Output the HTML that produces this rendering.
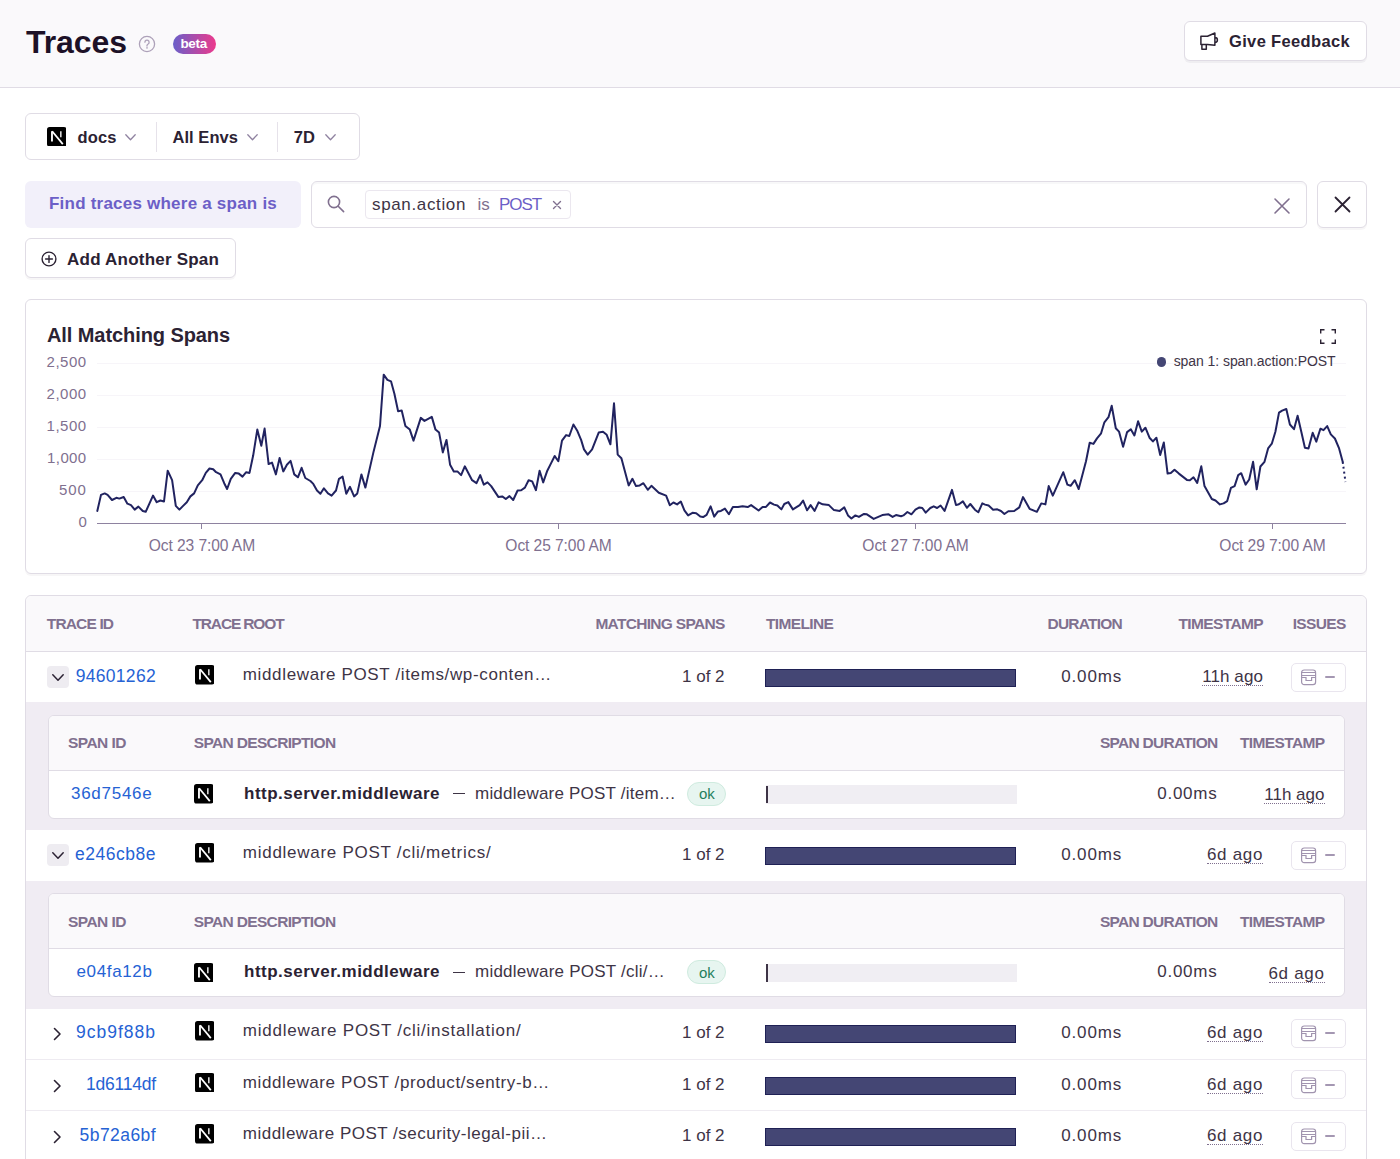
<!DOCTYPE html>
<html><head><meta charset="utf-8"><title>Traces</title>
<style>
html,body{margin:0;padding:0;width:1400px;height:1159px;overflow:hidden;background:#fff;font-family:'Liberation Sans', sans-serif;}
.t{position:absolute;line-height:1;white-space:nowrap;}
</style></head><body>
<div style="position:absolute;left:0px;top:0px;width:1400px;height:88px;box-sizing:border-box;background:#FAF9FB;border-bottom:1px solid #E0DCE5"></div>
<svg style="position:absolute;left:138px;top:35px" width="18" height="18" viewBox="0 0 18 18"><circle cx="9" cy="9" r="7.6" fill="none" stroke="#ADA1B9" stroke-width="1.3"/><path d="M6.9 7.2a2.1 2.1 0 1 1 3.2 1.8c-.7.4-1.1.8-1.1 1.6v.4" fill="none" stroke="#ADA1B9" stroke-width="1.3" stroke-linecap="round"/><circle cx="9" cy="12.9" r=".8" fill="#ADA1B9"/></svg>
<div style="position:absolute;left:173px;top:34px;width:43px;height:20px;box-sizing:border-box;border-radius:10px;background:linear-gradient(90deg,#6A5FC9,#EC3A8C)"></div>
<div style="position:absolute;left:1184px;top:21px;width:183px;height:40px;box-sizing:border-box;background:#fff;border:1px solid #E0DCE5;border-radius:6px;box-shadow:0 2px 0 rgba(43,34,51,0.05)"></div>
<svg style="position:absolute;left:1200px;top:32px" width="19" height="19" viewBox="0 0 19 19"><path d="M0.9 4.3H7.5L14.9 1V13.3L7.5 12.4H0.9Z M1.9 12.4V17.3H6.3V12.4 M15 5.6A2.4 2.4 0 0 1 15 10.4" fill="none" stroke="#2B2233" stroke-width="1.5" stroke-linejoin="round"/></svg>
<div style="position:absolute;left:25px;top:113px;width:335px;height:47px;box-sizing:border-box;background:#fff;border:1px solid #E0DCE5;border-radius:6px"></div>
<svg style="position:absolute;left:46.8px;top:126.8px" width="19.5" height="19.5" viewBox="0 0 20 20"><rect x="0" y="0" width="20" height="20" rx="2.6" fill="#000"/><path d="M5.1 14.9V4.3" stroke="#fff" stroke-width="1.9"/><path d="M5.3 4.4L16.2 17.6" stroke="#fff" stroke-width="1.8"/><path d="M14.2 4.4V10.6" stroke="#fff" stroke-width="1.4"/></svg>
<svg style="position:absolute;left:125px;top:133.5px;overflow:visible" width="11" height="6.5" viewBox="0 0 11 6.5"><path d="M0.8 0.8L5.5 5.7L10.2 0.8" fill="none" stroke="#8F82A0" stroke-width="1.3" stroke-linecap="round" stroke-linejoin="round"/></svg>
<div style="position:absolute;left:156px;top:122px;width:1px;height:30px;box-sizing:border-box;background:#E6E2EA"></div>
<svg style="position:absolute;left:246.5px;top:133.5px;overflow:visible" width="11" height="6.5" viewBox="0 0 11 6.5"><path d="M0.8 0.8L5.5 5.7L10.2 0.8" fill="none" stroke="#8F82A0" stroke-width="1.3" stroke-linecap="round" stroke-linejoin="round"/></svg>
<div style="position:absolute;left:277px;top:122px;width:1px;height:30px;box-sizing:border-box;background:#E6E2EA"></div>
<svg style="position:absolute;left:324.5px;top:133.5px;overflow:visible" width="11" height="6.5" viewBox="0 0 11 6.5"><path d="M0.8 0.8L5.5 5.7L10.2 0.8" fill="none" stroke="#8F82A0" stroke-width="1.3" stroke-linecap="round" stroke-linejoin="round"/></svg>
<div style="position:absolute;left:25px;top:181px;width:276px;height:47px;box-sizing:border-box;background:#F2F0FA;border-radius:6px"></div>
<div style="position:absolute;left:311px;top:181px;width:996px;height:47px;box-sizing:border-box;background:#fff;border:1px solid #E0DCE5;border-radius:6px;box-shadow:inset 0 2px 1px rgba(43,34,51,0.03)"></div>
<svg style="position:absolute;left:327px;top:195px" width="18" height="18" viewBox="0 0 18 18"><circle cx="7" cy="7" r="5.6" fill="none" stroke="#80708F" stroke-width="1.6"/><path d="M11.2 11.2L16.6 16.6" stroke="#80708F" stroke-width="1.6" stroke-linecap="round"/></svg>
<div style="position:absolute;left:365px;top:190px;width:206px;height:29px;box-sizing:border-box;background:#fff;border:1px solid #EBE7EF;border-radius:4px"></div>
<svg style="position:absolute;left:552px;top:200px" width="10" height="10" viewBox="0 0 10 10"><path d="M1.5 1.5L8.5 8.5M8.5 1.5L1.5 8.5" stroke="#80708F" stroke-width="1.4" stroke-linecap="round"/></svg>
<svg style="position:absolute;left:1273px;top:197px" width="18" height="18" viewBox="0 0 18 18"><path d="M2 2L16 16M16 2L2 16" stroke="#80708F" stroke-width="1.6" stroke-linecap="round"/></svg>
<div style="position:absolute;left:1317px;top:181px;width:50px;height:47px;box-sizing:border-box;background:#fff;border:1px solid #E0DCE5;border-radius:6px;box-shadow:0 2px 0 rgba(43,34,51,0.04)"></div>
<svg style="position:absolute;left:1334px;top:196px" width="17" height="17" viewBox="0 0 17 17"><path d="M1.5 1.5L15.5 15.5M15.5 1.5L1.5 15.5" stroke="#2B2233" stroke-width="1.8" stroke-linecap="round"/></svg>
<div style="position:absolute;left:25px;top:238px;width:211px;height:40px;box-sizing:border-box;background:#fff;border:1px solid #E0DCE5;border-radius:6px;box-shadow:0 2px 0 rgba(43,34,51,0.04)"></div>
<svg style="position:absolute;left:41px;top:251px" width="16" height="16" viewBox="0 0 16 16"><circle cx="8" cy="8" r="6.9" fill="none" stroke="#2B2233" stroke-width="1.4"/><path d="M8 4.6v6.8M4.6 8h6.8" stroke="#2B2233" stroke-width="1.4" stroke-linecap="round"/></svg>
<div style="position:absolute;left:25px;top:299px;width:1342px;height:275px;box-sizing:border-box;background:#fff;border:1px solid #E0DCE5;border-radius:6px;box-shadow:0 2px 0 rgba(43,34,51,0.04)"></div>
<svg style="position:absolute;left:1319.5px;top:329px" width="16" height="15" viewBox="0 0 16 15"><path d="M0.7 4.5V0.7h3.8M11.5 0.7h3.8v3.8M15.3 10.5v3.8h-3.8M4.5 14.3H0.7v-3.8" fill="none" stroke="#2B2233" stroke-width="1.4"/></svg>
<div style="position:absolute;left:97px;top:363px;width:1249px;height:1px;box-sizing:border-box;background:#F7F5F9"></div>
<div style="position:absolute;left:97px;top:395px;width:1249px;height:1px;box-sizing:border-box;background:#F7F5F9"></div>
<div style="position:absolute;left:97px;top:427px;width:1249px;height:1px;box-sizing:border-box;background:#F7F5F9"></div>
<div style="position:absolute;left:97px;top:459px;width:1249px;height:1px;box-sizing:border-box;background:#F7F5F9"></div>
<div style="position:absolute;left:97px;top:491px;width:1249px;height:1px;box-sizing:border-box;background:#F7F5F9"></div>
<div style="position:absolute;left:97px;top:523px;width:1249px;height:1px;box-sizing:border-box;background:#8E82A0"></div>
<div style="position:absolute;left:1156.8px;top:357px;width:9.5px;height:9.5px;border-radius:50%;background:#444674"></div>
<div style="position:absolute;left:201px;top:524px;width:1px;height:5px;box-sizing:border-box;background:#8E82A0"></div>
<div style="position:absolute;left:558px;top:524px;width:1px;height:5px;box-sizing:border-box;background:#8E82A0"></div>
<div style="position:absolute;left:915px;top:524px;width:1px;height:5px;box-sizing:border-box;background:#8E82A0"></div>
<div style="position:absolute;left:1272px;top:524px;width:1px;height:5px;box-sizing:border-box;background:#8E82A0"></div>
<svg style="position:absolute;left:0;top:0" width="1400" height="600" viewBox="0 0 1400 600"><path d="M97.3 511.0 L101.0 494.9 L104.7 493.4 L107.6 494.9 L112.0 500.0 L116.4 497.8 L119.3 498.6 L123.7 497.0 L127.4 503.7 L131.0 505.2 L134.7 509.6 L138.4 506.6 L142.8 511.0 L145.7 511.8 L149.4 503.7 L153.0 495.6 L156.7 502.2 L160.4 500.5 L164.0 501.5 L167.7 470.7 L172.1 480.2 L175.8 505.9 L179.4 509.6 L183.1 505.9 L186.8 502.2 L190.4 496.4 L194.1 493.4 L197.8 485.4 L202.2 480.2 L205.8 472.9 L209.5 468.5 L213.2 469.2 L216.1 472.2 L220.5 474.4 L224.2 483.2 L227.1 489.0 L230.8 478.8 L235.2 472.9 L238.8 473.6 L242.5 476.6 L246.2 472.2 L249.5 472.9 L253.2 455.3 L257.3 429.6 L261.3 445.8 L264.6 428.6 L268.6 464.1 L272.0 462.6 L275.9 474.4 L279.6 458.0 L283.3 471.4 L286.9 464.8 L290.6 460.9 L294.3 474.4 L297.9 477.3 L301.6 467.8 L305.3 478.0 L310.4 481.0 L313.3 483.9 L317.0 490.5 L320.4 493.7 L323.9 488.3 L328.0 493.4 L331.6 495.6 L336.0 490.5 L339.0 478.8 L342.6 476.6 L346.3 493.7 L350.0 486.8 L354.1 496.4 L357.3 493.4 L361.4 474.4 L365.4 487.6 L373.4 452.4 L380.0 426.0 L383.7 374.7 L387.4 379.8 L391.0 381.3 L394.4 393.7 L398.1 411.3 L401.7 410.6 L405.4 426.0 L409.8 429.6 L413.5 440.6 L420.8 417.9 L424.5 420.9 L431.8 416.9 L435.5 429.6 L439.1 432.6 L442.8 452.4 L446.5 439.9 L450.1 464.8 L453.8 471.4 L457.4 471.4 L461.1 475.1 L464.8 466.3 L472.1 480.2 L476.5 483.2 L480.2 475.1 L483.8 484.6 L487.5 482.4 L491.2 486.1 L498.5 497.1 L502.2 496.4 L505.8 499.0 L509.5 496.1 L513.2 500.0 L517.6 490.5 L521.2 490.2 L524.9 487.6 L528.6 480.2 L532.2 481.4 L535.9 490.2 L539.6 470.7 L543.2 482.4 L547.3 470.7 L551.0 463.4 L554.7 456.0 L558.3 461.2 L562.0 440.6 L566.1 435.1 L569.3 436.0 L573.4 424.5 L577.4 431.1 L581.1 439.9 L584.0 449.4 L587.7 454.6 L592.1 449.4 L598.7 432.6 L603.0 431.8 L606.7 434.8 L610.4 444.3 L614.0 403.3 L617.7 454.6 L621.4 458.2 L628.7 485.4 L632.4 478.8 L636.0 486.1 L639.7 485.4 L643.4 483.2 L647.8 489.8 L651.4 485.8 L658.8 492.7 L666.1 495.6 L669.8 505.2 L673.4 502.5 L677.1 504.4 L680.8 501.5 L684.4 510.3 L688.1 515.4 L692.5 512.8 L696.2 513.2 L700.3 516.6 L703.1 517.1 L706.6 514.9 L710.6 506.3 L714.2 516.6 L718.0 511.4 L720.9 510.9 L724.9 508.6 L728.9 514.3 L732.9 506.9 L738.0 507.1 L742.6 506.3 L747.7 507.1 L751.1 505.1 L758.6 510.5 L762.6 506.9 L766.0 506.9 L770.0 502.5 L774.0 504.6 L777.4 505.5 L781.4 509.4 L784.3 504.0 L788.3 502.1 L792.9 509.4 L796.9 506.9 L799.7 505.1 L803.1 500.6 L807.1 510.3 L810.6 505.1 L814.6 510.9 L818.6 502.3 L822.6 504.3 L828.9 505.1 L834.0 510.1 L839.7 510.9 L844.3 507.4 L848.0 515.4 L851.4 518.5 L855.4 515.4 L858.9 516.9 L864.0 513.9 L866.9 514.3 L873.7 518.9 L878.3 516.9 L882.3 515.1 L888.6 514.3 L892.6 516.9 L896.0 515.1 L901.1 516.2 L903.4 515.4 L907.4 512.0 L911.4 514.3 L915.4 509.7 L919.4 507.4 L922.3 508.0 L925.7 512.6 L930.3 508.0 L933.7 506.3 L937.1 508.0 L940.6 505.5 L944.6 510.9 L952.0 489.9 L956.0 505.1 L958.9 504.3 L962.9 501.4 L966.9 507.8 L970.3 504.0 L974.9 509.7 L978.3 512.3 L982.3 503.4 L985.1 504.6 L988.6 505.5 L993.1 509.7 L997.3 509.3 L1001.0 511.0 L1004.4 514.0 L1008.3 511.3 L1014.2 511.0 L1019.3 507.4 L1023.0 497.1 L1029.6 508.8 L1036.9 511.8 L1041.3 503.4 L1045.4 504.4 L1048.7 486.1 L1052.8 495.6 L1063.3 472.2 L1067.4 484.6 L1070.6 485.8 L1074.8 480.2 L1078.7 489.0 L1086.0 461.2 L1089.7 442.8 L1093.4 443.9 L1097.0 438.4 L1101.1 433.3 L1104.4 422.3 L1108.5 417.2 L1111.7 405.7 L1115.8 428.2 L1119.0 431.6 L1123.1 446.8 L1127.1 432.1 L1130.8 429.2 L1134.4 435.5 L1138.1 421.3 L1141.8 431.6 L1145.4 427.7 L1149.5 437.7 L1152.9 441.4 L1156.4 437.7 L1160.2 455.0 L1163.8 442.4 L1167.6 473.6 L1170.8 472.9 L1174.5 469.7 L1178.9 473.6 L1186.9 479.9 L1189.9 480.2 L1193.5 477.3 L1197.2 482.9 L1201.3 466.3 L1204.5 486.1 L1211.8 499.0 L1215.5 500.5 L1219.9 504.4 L1223.6 503.4 L1227.2 501.1 L1230.9 487.9 L1234.6 486.1 L1238.2 475.1 L1241.2 473.2 L1245.6 484.6 L1249.2 479.5 L1253.1 461.8 L1256.7 489.3 L1260.4 466.5 L1264.5 461.8 L1268.1 448.4 L1271.8 443.7 L1275.4 431.8 L1279.0 412.6 L1282.1 410.6 L1286.3 409.0 L1289.9 424.5 L1294.0 429.2 L1297.6 415.7 L1301.3 431.8 L1304.9 447.8 L1308.5 448.4 L1312.7 432.8 L1316.3 441.6 L1320.4 428.7 L1323.5 430.2 L1327.2 426.1 L1330.8 434.4 L1334.9 438.5 L1339.1 448.4 L1342.7 461.8" fill="none" stroke="#212360" stroke-width="2" stroke-linejoin="round" stroke-linecap="round"/><path d="M1342.7 461.8L1345.5 482" fill="none" stroke="#212360" stroke-width="2" stroke-dasharray="2 3"/></svg>
<div style="position:absolute;left:25px;top:595px;width:1342px;height:605px;box-sizing:border-box;background:#fff;border:1px solid #E0DCE5;border-radius:6px"></div>
<div style="position:absolute;left:26px;top:596px;width:1340px;height:56px;box-sizing:border-box;background:#FAF9FB;border-bottom:1px solid #E0DCE5;border-radius:6px 6px 0 0"></div>
<div style="position:absolute;left:46.8px;top:666px;width:22.200000000000003px;height:22px;box-sizing:border-box;background:#EEECF1;border-radius:4px"></div>
<svg style="position:absolute;left:51.8px;top:674px;overflow:visible" width="12" height="7" viewBox="0 0 12 7"><path d="M0.8 0.8L6.0 6.2L11.2 0.8" fill="none" stroke="#2B2233" stroke-width="1.5" stroke-linecap="round" stroke-linejoin="round"/></svg>
<svg style="position:absolute;left:194.8px;top:665px" width="19.5" height="19.5" viewBox="0 0 20 20"><rect x="0" y="0" width="20" height="20" rx="2.6" fill="#000"/><path d="M5.1 14.9V4.3" stroke="#fff" stroke-width="1.9"/><path d="M5.3 4.4L16.2 17.6" stroke="#fff" stroke-width="1.8"/><path d="M14.2 4.4V10.6" stroke="#fff" stroke-width="1.4"/></svg>
<div style="position:absolute;left:765.3px;top:669px;width:250.70000000000005px;height:18px;box-sizing:border-box;background:#444674;border:1px solid #1F2155"></div>
<div style="position:absolute;left:1291px;top:662.6px;width:55px;height:29.0px;box-sizing:border-box;background:#fff;border:1px solid #E9E5EE;border-radius:5px"></div>
<svg style="position:absolute;left:1300px;top:669px" width="17" height="17" viewBox="0 0 17 17"><rect x="1.6" y="1" width="14" height="14.6" rx="2.6" fill="none" stroke="#A194AF" stroke-width="1.2"/><path d="M1.6 3.5h14 M1.6 6.5h14 M1.6 8.5h4.4v3h5.6v-3h4" fill="none" stroke="#A194AF" stroke-width="1.2"/></svg>
<div style="position:absolute;left:1325px;top:676px;width:10px;height:2px;box-sizing:border-box;background:#A497B2;border-radius:1px"></div>
<div style="position:absolute;left:26px;top:702px;width:1340px;height:128px;box-sizing:border-box;background:#F0ECF3"></div>
<div style="position:absolute;left:47.5px;top:714.5px;width:1297.5px;height:104.0px;box-sizing:border-box;background:#fff;border:1px solid #E0DCE5;border-radius:6px"></div>
<div style="position:absolute;left:48.5px;top:715.5px;width:1295.5px;height:55.0px;box-sizing:border-box;background:#FAF9FB;border-bottom:1px solid #E0DCE5;border-radius:5px 5px 0 0"></div>
<svg style="position:absolute;left:193.75px;top:784.0px" width="19.5" height="19.5" viewBox="0 0 20 20"><rect x="0" y="0" width="20" height="20" rx="2.6" fill="#000"/><path d="M5.1 14.9V4.3" stroke="#fff" stroke-width="1.9"/><path d="M5.3 4.4L16.2 17.6" stroke="#fff" stroke-width="1.8"/><path d="M14.2 4.4V10.6" stroke="#fff" stroke-width="1.4"/></svg>
<div style="position:absolute;left:453px;top:793.3px;width:11.5px;height:1.0px;box-sizing:border-box;background:#3E3446"></div>
<div style="position:absolute;left:687.4px;top:781.8px;width:38.60000000000002px;height:24.200000000000045px;box-sizing:border-box;background:#E7F5F0;border:1px solid #CFEBDF;border-radius:12px"></div>
<div style="position:absolute;left:766px;top:785.0px;width:251.20000000000005px;height:18.5px;box-sizing:border-box;background:#F0EEF3"></div>
<div style="position:absolute;left:766px;top:785.5px;width:1.6000000000000227px;height:17.5px;box-sizing:border-box;background:#3E3446"></div>
<div style="position:absolute;left:46.8px;top:844px;width:22.200000000000003px;height:22px;box-sizing:border-box;background:#EEECF1;border-radius:4px"></div>
<svg style="position:absolute;left:51.8px;top:852px;overflow:visible" width="12" height="7" viewBox="0 0 12 7"><path d="M0.8 0.8L6.0 6.2L11.2 0.8" fill="none" stroke="#2B2233" stroke-width="1.5" stroke-linecap="round" stroke-linejoin="round"/></svg>
<svg style="position:absolute;left:194.8px;top:843px" width="19.5" height="19.5" viewBox="0 0 20 20"><rect x="0" y="0" width="20" height="20" rx="2.6" fill="#000"/><path d="M5.1 14.9V4.3" stroke="#fff" stroke-width="1.9"/><path d="M5.3 4.4L16.2 17.6" stroke="#fff" stroke-width="1.8"/><path d="M14.2 4.4V10.6" stroke="#fff" stroke-width="1.4"/></svg>
<div style="position:absolute;left:765.3px;top:847px;width:250.70000000000005px;height:18px;box-sizing:border-box;background:#444674;border:1px solid #1F2155"></div>
<div style="position:absolute;left:1291px;top:840.6px;width:55px;height:29.0px;box-sizing:border-box;background:#fff;border:1px solid #E9E5EE;border-radius:5px"></div>
<svg style="position:absolute;left:1300px;top:847px" width="17" height="17" viewBox="0 0 17 17"><rect x="1.6" y="1" width="14" height="14.6" rx="2.6" fill="none" stroke="#A194AF" stroke-width="1.2"/><path d="M1.6 3.5h14 M1.6 6.5h14 M1.6 8.5h4.4v3h5.6v-3h4" fill="none" stroke="#A194AF" stroke-width="1.2"/></svg>
<div style="position:absolute;left:1325px;top:854px;width:10px;height:2px;box-sizing:border-box;background:#A497B2;border-radius:1px"></div>
<div style="position:absolute;left:26px;top:881px;width:1340px;height:128px;box-sizing:border-box;background:#F0ECF3"></div>
<div style="position:absolute;left:47.5px;top:893px;width:1297.5px;height:104px;box-sizing:border-box;background:#fff;border:1px solid #E0DCE5;border-radius:6px"></div>
<div style="position:absolute;left:48.5px;top:894px;width:1295.5px;height:55px;box-sizing:border-box;background:#FAF9FB;border-bottom:1px solid #E0DCE5;border-radius:5px 5px 0 0"></div>
<svg style="position:absolute;left:193.75px;top:962.5px" width="19.5" height="19.5" viewBox="0 0 20 20"><rect x="0" y="0" width="20" height="20" rx="2.6" fill="#000"/><path d="M5.1 14.9V4.3" stroke="#fff" stroke-width="1.9"/><path d="M5.3 4.4L16.2 17.6" stroke="#fff" stroke-width="1.8"/><path d="M14.2 4.4V10.6" stroke="#fff" stroke-width="1.4"/></svg>
<div style="position:absolute;left:453px;top:971.8px;width:11.5px;height:1.0px;box-sizing:border-box;background:#3E3446"></div>
<div style="position:absolute;left:687.4px;top:960.3px;width:38.60000000000002px;height:24.200000000000045px;box-sizing:border-box;background:#E7F5F0;border:1px solid #CFEBDF;border-radius:12px"></div>
<div style="position:absolute;left:766px;top:963.5px;width:251.20000000000005px;height:18.5px;box-sizing:border-box;background:#F0EEF3"></div>
<div style="position:absolute;left:766px;top:964px;width:1.6000000000000227px;height:17.5px;box-sizing:border-box;background:#3E3446"></div>
<svg style="position:absolute;left:53px;top:1027px" width="9" height="14" viewBox="0 0 9 14"><path d="M1.5 1.5L7 7L1.5 12.5" fill="none" stroke="#2B2233" stroke-width="1.6" stroke-linecap="round" stroke-linejoin="round"/></svg>
<svg style="position:absolute;left:194.8px;top:1021px" width="19.5" height="19.5" viewBox="0 0 20 20"><rect x="0" y="0" width="20" height="20" rx="2.6" fill="#000"/><path d="M5.1 14.9V4.3" stroke="#fff" stroke-width="1.9"/><path d="M5.3 4.4L16.2 17.6" stroke="#fff" stroke-width="1.8"/><path d="M14.2 4.4V10.6" stroke="#fff" stroke-width="1.4"/></svg>
<div style="position:absolute;left:765.3px;top:1025px;width:250.70000000000005px;height:18px;box-sizing:border-box;background:#444674;border:1px solid #1F2155"></div>
<div style="position:absolute;left:1291px;top:1018.6px;width:55px;height:28.999999999999886px;box-sizing:border-box;background:#fff;border:1px solid #E9E5EE;border-radius:5px"></div>
<svg style="position:absolute;left:1300px;top:1025px" width="17" height="17" viewBox="0 0 17 17"><rect x="1.6" y="1" width="14" height="14.6" rx="2.6" fill="none" stroke="#A194AF" stroke-width="1.2"/><path d="M1.6 3.5h14 M1.6 6.5h14 M1.6 8.5h4.4v3h5.6v-3h4" fill="none" stroke="#A194AF" stroke-width="1.2"/></svg>
<div style="position:absolute;left:1325px;top:1032px;width:10px;height:2px;box-sizing:border-box;background:#A497B2;border-radius:1px"></div>
<div style="position:absolute;left:26px;top:1059px;width:1340px;height:1px;box-sizing:border-box;background:#EEEBF1"></div>
<svg style="position:absolute;left:53px;top:1078.7px" width="9" height="14" viewBox="0 0 9 14"><path d="M1.5 1.5L7 7L1.5 12.5" fill="none" stroke="#2B2233" stroke-width="1.6" stroke-linecap="round" stroke-linejoin="round"/></svg>
<svg style="position:absolute;left:194.8px;top:1072.7px" width="19.5" height="19.5" viewBox="0 0 20 20"><rect x="0" y="0" width="20" height="20" rx="2.6" fill="#000"/><path d="M5.1 14.9V4.3" stroke="#fff" stroke-width="1.9"/><path d="M5.3 4.4L16.2 17.6" stroke="#fff" stroke-width="1.8"/><path d="M14.2 4.4V10.6" stroke="#fff" stroke-width="1.4"/></svg>
<div style="position:absolute;left:765.3px;top:1076.7px;width:250.70000000000005px;height:18.0px;box-sizing:border-box;background:#444674;border:1px solid #1F2155"></div>
<div style="position:absolute;left:1291px;top:1070.3px;width:55px;height:29.0px;box-sizing:border-box;background:#fff;border:1px solid #E9E5EE;border-radius:5px"></div>
<svg style="position:absolute;left:1300px;top:1077px" width="17" height="17" viewBox="0 0 17 17"><rect x="1.6" y="1" width="14" height="14.6" rx="2.6" fill="none" stroke="#A194AF" stroke-width="1.2"/><path d="M1.6 3.5h14 M1.6 6.5h14 M1.6 8.5h4.4v3h5.6v-3h4" fill="none" stroke="#A194AF" stroke-width="1.2"/></svg>
<div style="position:absolute;left:1325px;top:1084px;width:10px;height:2px;box-sizing:border-box;background:#A497B2;border-radius:1px"></div>
<div style="position:absolute;left:26px;top:1110px;width:1340px;height:1px;box-sizing:border-box;background:#EEEBF1"></div>
<svg style="position:absolute;left:53px;top:1130.1px" width="9" height="14" viewBox="0 0 9 14"><path d="M1.5 1.5L7 7L1.5 12.5" fill="none" stroke="#2B2233" stroke-width="1.6" stroke-linecap="round" stroke-linejoin="round"/></svg>
<svg style="position:absolute;left:194.8px;top:1124.1px" width="19.5" height="19.5" viewBox="0 0 20 20"><rect x="0" y="0" width="20" height="20" rx="2.6" fill="#000"/><path d="M5.1 14.9V4.3" stroke="#fff" stroke-width="1.9"/><path d="M5.3 4.4L16.2 17.6" stroke="#fff" stroke-width="1.8"/><path d="M14.2 4.4V10.6" stroke="#fff" stroke-width="1.4"/></svg>
<div style="position:absolute;left:765.3px;top:1128.1px;width:250.70000000000005px;height:18.0px;box-sizing:border-box;background:#444674;border:1px solid #1F2155"></div>
<div style="position:absolute;left:1291px;top:1121.6999999999998px;width:55px;height:29.0px;box-sizing:border-box;background:#fff;border:1px solid #E9E5EE;border-radius:5px"></div>
<svg style="position:absolute;left:1300px;top:1128px" width="17" height="17" viewBox="0 0 17 17"><rect x="1.6" y="1" width="14" height="14.6" rx="2.6" fill="none" stroke="#A194AF" stroke-width="1.2"/><path d="M1.6 3.5h14 M1.6 6.5h14 M1.6 8.5h4.4v3h5.6v-3h4" fill="none" stroke="#A194AF" stroke-width="1.2"/></svg>
<div style="position:absolute;left:1325px;top:1135px;width:10px;height:2px;box-sizing:border-box;background:#A497B2;border-radius:1px"></div>
<div class="t" style="left:26.00px;top:25.70px;font-size:32px;font-weight:700;color:#1D1127;letter-spacing:-0.070px;">Traces</div>
<div class="t" style="left:180.40px;top:36.90px;font-size:13.5px;font-weight:700;color:#FFFFFF;letter-spacing:-0.291px;">beta</div>
<div class="t" style="left:1229.00px;top:33.00px;font-size:16.5px;font-weight:700;color:#2B2233;letter-spacing:0.347px;">Give Feedback</div>
<div class="t" style="left:77.50px;top:129.00px;font-size:16.5px;font-weight:700;color:#2B2233;letter-spacing:0.121px;">docs</div>
<div class="t" style="left:172.50px;top:129.00px;font-size:16.5px;font-weight:700;color:#2B2233;letter-spacing:0.049px;">All Envs</div>
<div class="t" style="left:293.80px;top:129.00px;font-size:16.5px;font-weight:700;color:#2B2233;letter-spacing:0.053px;">7D</div>
<div class="t" style="left:49.00px;top:195.30px;font-size:17px;font-weight:700;color:#6C5FC7;letter-spacing:0.221px;">Find traces where a span is</div>
<div class="t" style="left:372.00px;top:196.41px;font-size:17px;font-weight:400;color:#3E3446;letter-spacing:0.641px;">span.action</div>
<div class="t" style="left:477.50px;top:196.41px;font-size:17px;font-weight:400;color:#80708F;letter-spacing:-0.141px;">is</div>
<div class="t" style="left:499.00px;top:196.41px;font-size:17px;font-weight:400;color:#6C5FC7;letter-spacing:-1.074px;">POST</div>
<div class="t" style="left:67.10px;top:250.61px;font-size:17px;font-weight:700;color:#2B2233;letter-spacing:0.213px;">Add Another Span</div>
<div class="t" style="left:47.00px;top:325.01px;font-size:20px;font-weight:700;color:#2B2233;letter-spacing:-0.082px;">All Matching Spans</div>
<div class="t" style="left:1173.70px;top:354.01px;font-size:14px;font-weight:400;color:#3E3446;letter-spacing:-0.068px;">span 1: span.action:POST</div>
<div class="t" style="left:46.60px;top:353.81px;font-size:15px;font-weight:400;color:#80708F;letter-spacing:0.491px;">2,500</div>
<div class="t" style="left:46.60px;top:385.92px;font-size:15px;font-weight:400;color:#80708F;letter-spacing:0.491px;">2,000</div>
<div class="t" style="left:46.60px;top:418.01px;font-size:15px;font-weight:400;color:#80708F;letter-spacing:0.491px;">1,500</div>
<div class="t" style="left:47.10px;top:450.11px;font-size:15px;font-weight:400;color:#80708F;letter-spacing:0.391px;">1,000</div>
<div class="t" style="left:59.10px;top:482.20px;font-size:15px;font-weight:400;color:#80708F;letter-spacing:0.823px;">500</div>
<div class="t" style="left:78.60px;top:514.31px;font-size:15px;font-weight:400;color:#80708F;letter-spacing:-0.344px;">0</div>
<div class="t" style="left:148.75px;top:537.80px;font-size:15.6px;font-weight:400;color:#80708F;letter-spacing:-0.085px;">Oct 23 7:00 AM</div>
<div class="t" style="left:505.35px;top:537.80px;font-size:15.6px;font-weight:400;color:#80708F;letter-spacing:-0.085px;">Oct 25 7:00 AM</div>
<div class="t" style="left:862.35px;top:537.80px;font-size:15.6px;font-weight:400;color:#80708F;letter-spacing:-0.085px;">Oct 27 7:00 AM</div>
<div class="t" style="left:1219.35px;top:537.80px;font-size:15.6px;font-weight:400;color:#80708F;letter-spacing:-0.085px;">Oct 29 7:00 AM</div>
<div class="t" style="left:46.80px;top:615.61px;font-size:15.5px;font-weight:700;color:#80708F;letter-spacing:-0.850px;">TRACE ID</div>
<div class="t" style="left:192.50px;top:615.61px;font-size:15.5px;font-weight:700;color:#80708F;letter-spacing:-1.147px;">TRACE ROOT</div>
<div class="t" style="left:595.40px;top:615.61px;font-size:15.5px;font-weight:700;color:#80708F;letter-spacing:-0.696px;">MATCHING SPANS</div>
<div class="t" style="left:766.00px;top:615.61px;font-size:15.5px;font-weight:700;color:#80708F;letter-spacing:-0.643px;">TIMELINE</div>
<div class="t" style="left:1047.50px;top:615.61px;font-size:15.5px;font-weight:700;color:#80708F;letter-spacing:-0.770px;">DURATION</div>
<div class="t" style="left:1178.40px;top:615.61px;font-size:15.5px;font-weight:700;color:#80708F;letter-spacing:-0.614px;">TIMESTAMP</div>
<div class="t" style="left:1292.70px;top:615.61px;font-size:15.5px;font-weight:700;color:#80708F;letter-spacing:-0.643px;">ISSUES</div>
<div class="t" style="left:75.70px;top:668.21px;font-size:17.5px;font-weight:400;color:#2562D4;letter-spacing:0.303px;">94601262</div>
<div class="t" style="left:242.80px;top:665.80px;font-size:17px;font-weight:400;color:#3E3446;letter-spacing:0.641px;">middleware POST /items/wp-conten…</div>
<div class="t" style="left:682.00px;top:668.21px;font-size:17px;font-weight:400;color:#3E3446;letter-spacing:0.009px;">1 of 2</div>
<div class="t" style="left:1061.30px;top:668.21px;font-size:17px;font-weight:400;color:#3E3446;letter-spacing:0.825px;">0.00ms</div>
<div class="t" style="left:1202.20px;top:668.21px;font-size:17px;font-weight:400;color:#3E3446;letter-spacing:0.085px;border-bottom:1px dotted #80708F">11h ago</div>
<div class="t" style="left:68.00px;top:735.00px;font-size:15.5px;font-weight:700;color:#80708F;letter-spacing:-0.533px;">SPAN ID</div>
<div class="t" style="left:193.75px;top:735.00px;font-size:15.5px;font-weight:700;color:#80708F;letter-spacing:-0.654px;">SPAN DESCRIPTION</div>
<div class="t" style="left:1099.90px;top:735.00px;font-size:15.5px;font-weight:700;color:#80708F;letter-spacing:-0.713px;">SPAN DURATION</div>
<div class="t" style="left:1240.00px;top:735.00px;font-size:15.5px;font-weight:700;color:#80708F;letter-spacing:-0.625px;">TIMESTAMP</div>
<div class="t" style="left:71.00px;top:784.71px;font-size:17px;font-weight:400;color:#2562D4;letter-spacing:0.732px;">36d7546e</div>
<div class="t" style="left:244.00px;top:784.91px;font-size:17px;font-weight:700;color:#2B2233;letter-spacing:0.491px;">http.server.middleware</div>
<div class="t" style="left:475.00px;top:784.91px;font-size:17px;font-weight:400;color:#3E3446;letter-spacing:0.218px;">middleware POST /item…</div>
<div class="t" style="left:699.00px;top:786.01px;font-size:15px;font-weight:400;color:#1F7F5C;letter-spacing:-0.122px;">ok</div>
<div class="t" style="left:1157.20px;top:784.61px;font-size:17px;font-weight:400;color:#3E3446;letter-spacing:0.758px;">0.00ms</div>
<div class="t" style="left:1264.30px;top:786.00px;font-size:17px;font-weight:400;color:#3E3446;letter-spacing:-0.000px;border-bottom:1px dotted #80708F">11h ago</div>
<div class="t" style="left:75.00px;top:846.21px;font-size:17.5px;font-weight:400;color:#2562D4;letter-spacing:0.514px;">e246cb8e</div>
<div class="t" style="left:242.80px;top:843.80px;font-size:17px;font-weight:400;color:#3E3446;letter-spacing:0.732px;">middleware POST /cli/metrics/</div>
<div class="t" style="left:682.00px;top:846.21px;font-size:17px;font-weight:400;color:#3E3446;letter-spacing:0.009px;">1 of 2</div>
<div class="t" style="left:1061.30px;top:846.21px;font-size:17px;font-weight:400;color:#3E3446;letter-spacing:0.825px;">0.00ms</div>
<div class="t" style="left:1207.00px;top:846.21px;font-size:17px;font-weight:400;color:#3E3446;letter-spacing:0.667px;border-bottom:1px dotted #80708F">6d ago</div>
<div class="t" style="left:68.00px;top:913.50px;font-size:15.5px;font-weight:700;color:#80708F;letter-spacing:-0.533px;">SPAN ID</div>
<div class="t" style="left:193.75px;top:913.50px;font-size:15.5px;font-weight:700;color:#80708F;letter-spacing:-0.654px;">SPAN DESCRIPTION</div>
<div class="t" style="left:1099.90px;top:913.50px;font-size:15.5px;font-weight:700;color:#80708F;letter-spacing:-0.713px;">SPAN DURATION</div>
<div class="t" style="left:1240.00px;top:913.50px;font-size:15.5px;font-weight:700;color:#80708F;letter-spacing:-0.625px;">TIMESTAMP</div>
<div class="t" style="left:76.50px;top:963.21px;font-size:17px;font-weight:400;color:#2562D4;letter-spacing:0.637px;">e04fa12b</div>
<div class="t" style="left:244.00px;top:963.41px;font-size:17px;font-weight:700;color:#2B2233;letter-spacing:0.491px;">http.server.middleware</div>
<div class="t" style="left:475.00px;top:963.41px;font-size:17px;font-weight:400;color:#3E3446;letter-spacing:0.234px;">middleware POST /cli/…</div>
<div class="t" style="left:699.00px;top:964.51px;font-size:15px;font-weight:400;color:#1F7F5C;letter-spacing:-0.122px;">ok</div>
<div class="t" style="left:1157.20px;top:963.11px;font-size:17px;font-weight:400;color:#3E3446;letter-spacing:0.758px;">0.00ms</div>
<div class="t" style="left:1268.50px;top:964.50px;font-size:17px;font-weight:400;color:#3E3446;letter-spacing:0.667px;border-bottom:1px dotted #80708F">6d ago</div>
<div class="t" style="left:76.10px;top:1024.21px;font-size:17.5px;font-weight:400;color:#2562D4;letter-spacing:0.986px;">9cb9f88b</div>
<div class="t" style="left:242.80px;top:1021.80px;font-size:17px;font-weight:400;color:#3E3446;letter-spacing:0.759px;">middleware POST /cli/installation/</div>
<div class="t" style="left:682.00px;top:1024.21px;font-size:17px;font-weight:400;color:#3E3446;letter-spacing:0.009px;">1 of 2</div>
<div class="t" style="left:1061.30px;top:1024.21px;font-size:17px;font-weight:400;color:#3E3446;letter-spacing:0.825px;">0.00ms</div>
<div class="t" style="left:1207.00px;top:1024.21px;font-size:17px;font-weight:400;color:#3E3446;letter-spacing:0.667px;border-bottom:1px dotted #80708F">6d ago</div>
<div class="t" style="left:86.00px;top:1075.91px;font-size:17.5px;font-weight:400;color:#2562D4;letter-spacing:-0.213px;">1d6114df</div>
<div class="t" style="left:242.80px;top:1073.50px;font-size:17px;font-weight:400;color:#3E3446;letter-spacing:0.591px;">middleware POST /product/sentry-b…</div>
<div class="t" style="left:682.00px;top:1075.91px;font-size:17px;font-weight:400;color:#3E3446;letter-spacing:0.009px;">1 of 2</div>
<div class="t" style="left:1061.30px;top:1075.91px;font-size:17px;font-weight:400;color:#3E3446;letter-spacing:0.825px;">0.00ms</div>
<div class="t" style="left:1207.00px;top:1075.91px;font-size:17px;font-weight:400;color:#3E3446;letter-spacing:0.667px;border-bottom:1px dotted #80708F">6d ago</div>
<div class="t" style="left:79.60px;top:1127.30px;font-size:17.5px;font-weight:400;color:#2562D4;letter-spacing:0.425px;">5b72a6bf</div>
<div class="t" style="left:242.80px;top:1124.91px;font-size:17px;font-weight:400;color:#3E3446;letter-spacing:0.494px;">middleware POST /security-legal-pii…</div>
<div class="t" style="left:682.00px;top:1127.30px;font-size:17px;font-weight:400;color:#3E3446;letter-spacing:0.009px;">1 of 2</div>
<div class="t" style="left:1061.30px;top:1127.30px;font-size:17px;font-weight:400;color:#3E3446;letter-spacing:0.825px;">0.00ms</div>
<div class="t" style="left:1207.00px;top:1127.30px;font-size:17px;font-weight:400;color:#3E3446;letter-spacing:0.667px;border-bottom:1px dotted #80708F">6d ago</div>
</body></html>
